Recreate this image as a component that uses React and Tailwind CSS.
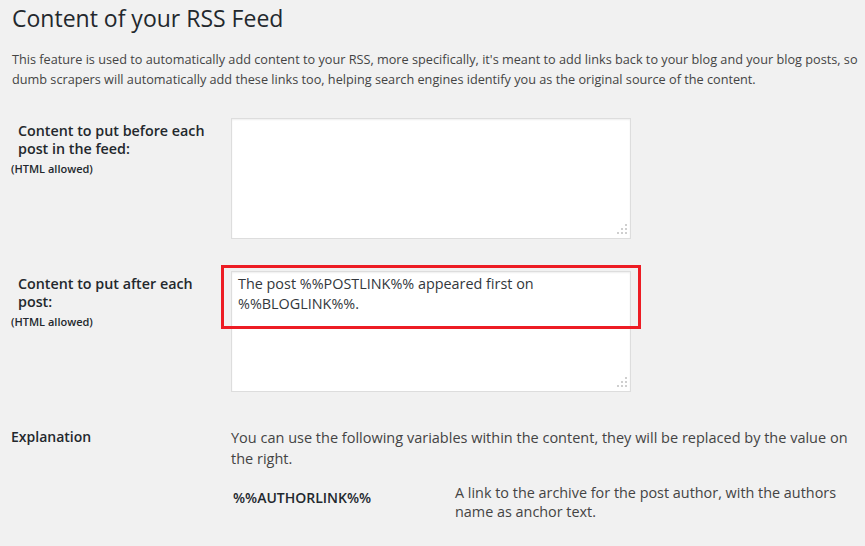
import React from "react";

function Dots() {
  return (
    <svg className="absolute right-[3px] bottom-[4px]" width="12" height="12" viewBox="0 0 12 12">
      <g fill="#cfcfcf">
        <rect x="10" y="2" width="2" height="2" />
        <rect x="6" y="6" width="2" height="2" />
        <rect x="10" y="6" width="2" height="2" />
        <rect x="2" y="10" width="2" height="2" />
        <rect x="6" y="10" width="2" height="2" />
        <rect x="10" y="10" width="2" height="2" />
      </g>
    </svg>
  );
}

function Box({ children, highlight }) {
  return (
    <div className="relative w-[400px] h-[121px] bg-white border border-[#dddddd] shadow-[inset_0_1px_2px_rgba(0,0,0,0.07)]">
      <div className="pl-[6px] pt-[2px] text-[14.4px] leading-[20px] text-[#32373c] whitespace-nowrap">{children}</div>
      <Dots />
      {highlight && (
        <div className="absolute left-[-11px] top-[-7px] w-[420px] h-[64px] border-[3px] border-[#ed1c24]" />
      )}
    </div>
  );
}

function Label({ lines }) {
  return (
    <div className="w-[231px] shrink-0 pt-[4px]">
      <div className="pl-[18px] text-[14.3px] leading-[18px] font-semibold text-[#23282d]">
        {lines[0]}
        <br />
        {lines[1]}
      </div>
      <div className="pl-[11px] mt-[4px] text-[11px] leading-[14px] font-semibold text-[#23282d]">(HTML allowed)</div>
    </div>
  );
}

export default function App() {
  return (
    <div className="w-[865px] h-[546px] overflow-hidden bg-[#f1f1f1] font-['Open_Sans',sans-serif] text-[#444444]">
      <h2 className="pl-[12px] pt-[3px] text-[23px] leading-[30px] font-normal text-[#23282d]">Content of your RSS Feed</h2>
      <p className="mt-[16px] pl-[12px] text-[12.7px] leading-[20px] whitespace-nowrap">
        This feature is used to automatically add content to your RSS, more specifically, it's meant to add links back to your blog and your blog posts, so
        <br />
        dumb scrapers will automatically add these links too, helping search engines identify you as the original source of the content.
      </p>

      <div className="mt-[29px] flex">
        <Label lines={["Content to put before each", "post in the feed:"]} />
        <Box />
      </div>

      <div className="mt-[32px] flex">
        <Label lines={["Content to put after each", "post:"]} />
        <Box highlight>
          The post %%POSTLINK%% appeared first on
          <br />
          %%BLOGLINK%%.
        </Box>
      </div>

      <div className="mt-[35px] flex">
        <div className="w-[231px] shrink-0 pl-[11px] text-[14px] leading-[20px] font-semibold text-[#23282d]">Explanation</div>
        <div>
          <p className="text-[14.5px] leading-[21px] whitespace-nowrap">
            You can use the following variables within the content, they will be replaced by the value on
            <br />
            the right.
          </p>
          <div className="mt-[14px] flex items-start">
            <div className="mt-[5px] w-[224px] shrink-0 pl-[2px] text-[14px] leading-[19px] font-semibold text-[#23282d]">%%AUTHORLINK%%</div>
            <div className="text-[14.4px] leading-[19px] whitespace-nowrap">
              A link to the archive for the post author, with the authors
              <br />
              name as anchor text.
            </div>
          </div>
        </div>
      </div>
    </div>
  );
}
